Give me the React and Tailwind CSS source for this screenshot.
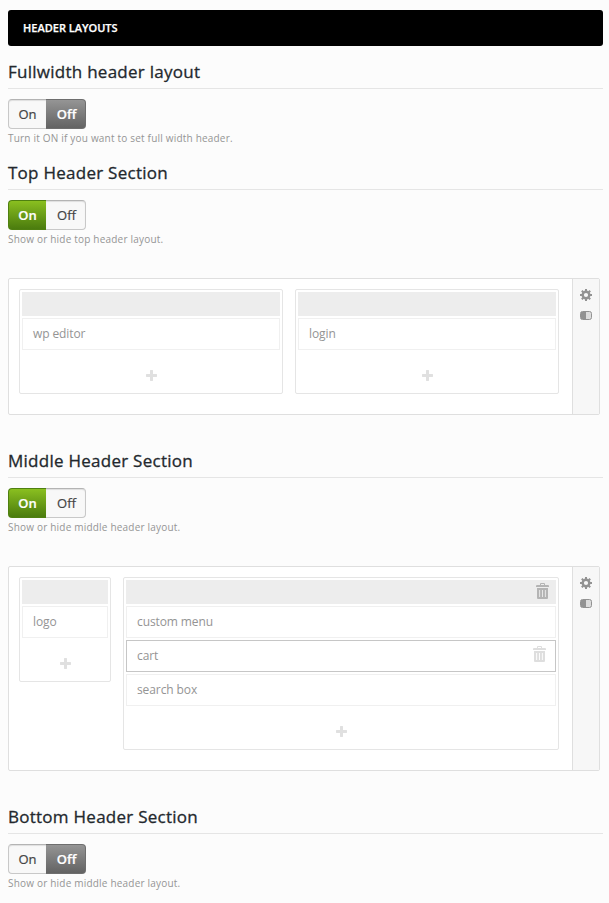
function Heading({ children }) {
  return (
    <h2 className="h-[31px] border-b border-[#e5e5e5] text-[17px] leading-[28px] font-normal tracking-[0.26px] whitespace-nowrap text-[#23282d] [-webkit-text-stroke:0.3px_#23282d]">
      {children}
    </h2>
  );
}

function Toggle({ on }) {
  const idle = "bg-[#f8f8f8] text-[#444] border-[#c8c8c8] border-t-[#b4b4b4] shadow-[inset_0_1px_1px_rgba(0,0,0,0.1)] [-webkit-text-stroke:0.2px_#444]";
  const green = "bg-linear-to-b from-[#8abf20] to-[#4b7c0e] text-white font-semibold border-[#4f8010] [-webkit-text-stroke:0.2px_#fff]";
  const gray = "bg-linear-to-b from-[#959595] to-[#636363] text-white font-semibold border-[#6e6e6e] [-webkit-text-stroke:0.2px_#fff]";
  return (
    <div className="mt-[10px] flex h-[30px] w-[78px] text-center text-[13px] leading-[28px]">
      <span className={`w-[38px] rounded-l-[4px] border border-r-0 ${on ? green : idle}`}>On</span>
      <span className={`w-[40px] rounded-r-[4px] border border-l-0 pl-[2px] ${on ? idle : gray}`}>Off</span>
    </div>
  );
}

function Setting({ title, on, hint }) {
  return (
    <section>
      <Heading>{title}</Heading>
      <Toggle on={on} />
      <p className="h-[20px] text-[10px] leading-[19px] tracking-[0.2px] whitespace-nowrap text-[#959595]">{hint}</p>
    </section>
  );
}

function Trash({ className }) {
  return (
    <svg width="13" height="16" viewBox="0 0 13 16" className={className} fill="currentColor">
      <path d="M4 2V1q0-1 1-1h3q1 0 1 1v1h3q1 0 1 1v1H0V3q0-1 1-1zM5 1v1h3V1z" fillRule="evenodd" />
      <path d="M1 5h11v10q0 1-1 1H2q-1 0-1-1zM3.2 7v7h.9V7zM6.05 7v7h.9V7zM8.9 7v7h.9V7z" fillRule="evenodd" />
    </svg>
  );
}

function Plus() {
  return (
    <svg width="11" height="11" viewBox="0 0 11 11" fill="#e0e0e0" className="ml-[1px]">
      <path d="M4.5 0h2l.5.5V4h3.500l.5.5v2l-.5.5H7v3.500l-.5.5h-2l-.5-.5V7H.5L0 6.500v-2L.5 4H4V.5z" />
    </svg>
  );
}

function Column({ width, items, removable }) {
  return (
    <div className={`flex flex-col gap-[2px] rounded-[2px] border border-[#e5e5e5] p-[2px] ${width}`}>
      <div className="flex h-[24px] items-center justify-end bg-[#ededed] pr-[7px]">
        {removable && <Trash className="mb-[2px] text-[#b4b4b4]" />}
      </div>
      {items.map(({ name, active }) => (
        <div
          key={name}
          className={`flex h-[32px] items-center justify-between border pr-[9px] pl-[10px] text-[12px] tracking-[-0.1px] text-[#949494] ${active ? "border-[#c6c6c6]" : "border-[#f0f0f0]"}`}
        >
          {name}
          {active && <Trash className="mb-[4px] text-[#dedede]" />}
        </div>
      ))}
      <div className="flex h-[39px] items-center justify-center pt-[7px]">
        <Plus />
      </div>
    </div>
  );
}

function Panel({ height, children }) {
  return (
    <div className={`mt-[28px] mb-[32px] flex w-[592px] rounded-[2px] border border-[#dfdfdf] bg-white ${height}`}>
      <div className="flex flex-1 items-start gap-[12px] p-[10px]">{children}</div>
      <div className="flex w-[27px] flex-col items-center border-l border-[#dfdfdf] bg-[#f7f7f7] pt-[10px]">
        <svg width="12" height="12" viewBox="0 0 12 12" fill="none" stroke="#929292">
          <circle cx="6" cy="6" r="3.3" strokeWidth="2.4" />
          <path d="M6 0v2M6 10v2M0 6h2M10 6h2M1.800 1.800l1.500 1.500M8.700 8.700l1.500 1.500M10.200 1.800L8.700 3.300M3.300 8.700l-1.500 1.500" strokeWidth="2" />
        </svg>
        <svg width="12" height="9" viewBox="0 0 12 9" className="mt-[10px]">
          <rect x=".5" y=".5" width="11" height="8" rx="2" fill="#dcdcdc" stroke="#929292" />
          <path d="M1 1h5v7H1z" fill="#929292" />
        </svg>
      </div>
    </div>
  );
}

export default function App() {
  return (
    <div className="h-[903px] w-[609px] overflow-hidden bg-[#fcfcfc] pt-[10px] pl-[8px] font-['Open_Sans',sans-serif]">
      <div className="w-[595px]">
        <div className="mb-[12px] h-[36px] rounded-[3px] bg-black pl-[15px] text-[11px] leading-[36px] font-semibold text-white [-webkit-text-stroke:0.25px_#fff]">
          HEADER LAYOUTS
        </div>
        <Setting title="Fullwidth header layout" on={false} hint="Turn it ON if you want to set full width header." />
        <div className="h-[10px]" />
        <Setting title="Top Header Section" on hint="Show or hide top header layout." />
        <Panel height="h-[137px]">
          <Column width="w-[264px]" items={[{ name: "wp editor" }]} />
          <Column width="w-[264px]" items={[{ name: "login" }]} />
        </Panel>
        <Setting title="Middle Header Section" on hint="Show or hide middle header layout." />
        <Panel height="h-[205px]">
          <Column width="w-[92px]" items={[{ name: "logo" }]} />
          <Column
            width="w-[436px]"
            removable
            items={[{ name: "custom menu" }, { name: "cart", active: true }, { name: "search box" }]}
          />
        </Panel>
        <Setting title="Bottom Header Section" on={false} hint="Show or hide middle header layout." />
      </div>
    </div>
  );
}
